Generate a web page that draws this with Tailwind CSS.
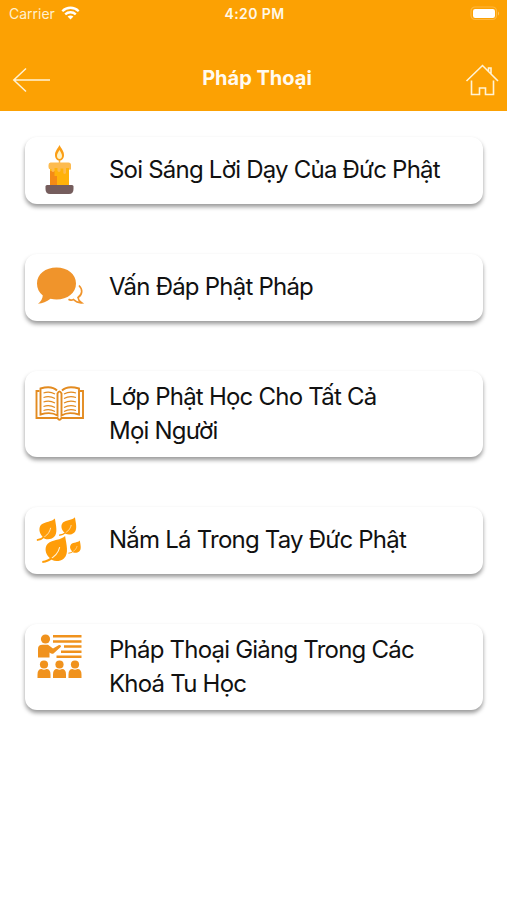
<!DOCTYPE html>
<html lang="vi">

<head>
	<meta charset="UTF-8">
	<meta name="viewport" content="width=device-width, initial-scale=1.0">
	<title>Pháp Thoại</title>
	<script src="https://cdn.jsdelivr.net/npm/@tailwindcss/browser@4"></script>
</head>

<body class="min-h-screen bg-white font-['Inter',sans-serif] text-[#111]">
	<header class="h-[110.5px] bg-[#fca103] text-white">
		<!-- status bar -->
		<div class="grid grid-cols-3 items-center h-[27px] pl-[9px] pr-[7px]">
			<div class="flex items-center gap-[6px] text-[14px] text-[#fff0cf]">
				<span>Carrier</span>
				<svg class="w-[19px] h-[14px] -mt-px" viewBox="0 0 19 14" fill="none" stroke="#fff" stroke-width="2.3">
					<path d="M1.3 5.2C6 .6 13 .6 17.700 5.200" />
					<path d="M4.200 8.400C7.200 5.500 11.800 5.500 14.800 8.400" />
					<path d="M9.500 13.500L6.600 10.500C8.300 9 10.700 9 12.400 10.500Z" fill="#fff" stroke="none" />
				</svg>
			</div>
			<div class="text-center text-[14px] font-semibold tracking-[0.4px] text-[#fff8e8]">4:20 PM</div>
			<svg class="justify-self-end w-[30px] h-[15px]" viewBox="0 0 30 15">
				<rect x="1" y="1" width="25.500" height="12.500" rx="4" fill="none" stroke="#fdb840" stroke-width="1.200" />
				<rect x="3" y="3" width="22" height="9" rx="2.200" fill="#fff" />
				<path d="M28 5.500V9.500C29.300 9 29.300 6 28 5.500Z" fill="#fdc665" />
			</svg>
		</div>
		<!-- navigation -->
		<div class="flex items-center justify-between h-[83px] pl-[12px] pr-[8px] pt-[23px]">
			<a href="#">
				<svg class="w-[39px] h-[26px]" viewBox="0 0 39 26" fill="none" stroke="#fff3d6" stroke-width="1.500">
					<path d="M14 1.500L1.800 13L14 24.500M1.800 13H38" />
				</svg>
			</a>
			<h1 class="pb-[4px] pr-[2px] text-[20px] font-bold text-[#fffaf0]">Pháp Thoại</h1>
			<a href="#">
				<svg class="w-[34px] h-[34px]" viewBox="0 0 34 34" fill="none" stroke="#fff3d6" stroke-width="1.600">
					<path d="M1.500 18L17.500 2.500L33 18M23.500 8V5H26V10.500" />
					<path d="M6.500 17.500V31.500H14.500V25H20.500V31.500H28.500V17.500" />
				</svg>
			</a>
		</div>
	</header>

	<main class="flex flex-col gap-[50px] pt-[26.500px] pl-[25px] pr-[24px] text-[24px] leading-[34px] tracking-[-0.78px]">
		<a href="#" class="flex items-center h-[67px] pb-px pl-[10px] rounded-xl bg-white shadow-[0_3px_4px_rgba(0,0,0,0.4)]">
			<svg class="w-[50px] h-[50px] mr-[24px] shrink-0" viewBox="0 0 50 50">
				<path d="M24.500 15V20" stroke="#f6b04a" stroke-width="1.500" />
				<path d="M24.500 0C22.500 4 20 6 20 10C20 13.500 22 15.500 24.500 15.500C27 15.500 29 13.500 29 10C29 6 26.500 4 24.500 0Z" fill="#fb9e16" />
				<path d="M24.500 5C23 7.500 22 9 22 11C22 13 23.200 14 24.500 14C25.800 14 27 13 27 11C27 9 26 7.500 24.500 5Z" fill="#fff3c4" />
				<path d="M15 20H34V41H15Z" fill="#ffb20a" />
				<path d="M15 26H19.500V31H22V41H15Z" fill="#f48a16" />
				<path d="M15.500 17.500H33.500Q36 17.500 36 20V24Q34.800 26 34 24V23H31V28Q29.500 30 28.300 28V23.500H25.500V26Q24 28 22.500 26V23H19.500V26Q18 28 16.500 26V24Q13.500 25 13.500 22V20Q13.500 17.500 15.500 17.500Z" fill="#fdbb50" />
				<path d="M12 40H37Q38.500 40 38.500 41.500V44Q38.500 49 34 49H15Q10.500 49 10.500 44V41.500Q10.500 40 12 40Z" fill="#755d5d" />
			</svg>
			<span>Soi Sáng Lời Dạy Của Đức Phật</span>
		</a>

		<a href="#" class="flex items-center h-[67px] pb-px pl-[10px] rounded-xl bg-white shadow-[0_3px_4px_rgba(0,0,0,0.4)]">
			<svg class="w-[50px] h-[50px] mr-[24px] shrink-0" viewBox="0 0 50 50">
				<path d="M21.500 5.500C32.500 5.500 41 12 41 21.500C41 31 32.500 37.500 21.500 37.500C19.500 37.500 17.500 37.300 15.500 36.800C11.500 40 7.500 41.500 3 41.800C6 39.500 7.500 36.500 7.800 33.500C4 30.500 2 26.500 2 21.500C2 12 10.500 5.500 21.500 5.500Z" fill="#f0942b" />
				<path d="M44 23.500C48 27.500 47.500 32.500 43 35.500C43.300 38 44.500 39.500 46.500 40.800C42.500 41 40.500 39.500 38.500 37.500C36.500 38.500 34.500 38 33.500 37.300" fill="none" stroke="#f0942b" stroke-width="1.700" />
			</svg>
			<span>Vấn Đáp Phật Pháp</span>
		</a>

		<a href="#" class="flex items-start h-[86px] pt-[9px] pl-[10px] rounded-xl bg-white shadow-[0_3px_4px_rgba(0,0,0,0.4)]">
			<svg class="w-[50px] h-[50px] -mt-px mr-[24px] shrink-0" viewBox="0 0 50 50" fill="none" stroke="#e38b20" stroke-width="1.900">
				<path d="M4.500 12H1.500V39H22.500Q24.500 42.500 26.500 39H48V12H45" />
				<path d="M22 11.500C18 7.500 12 7.500 5.500 9.500V35.500C12 33.500 18 33.500 22.500 36.500V14.500Q24.500 10.500 26.500 14.500V36.500C31 33.500 37 33.500 44 35.500V9.500C37 7.500 31 7.500 27 11.500" />
				<path d="M8.500 14Q14.500 12 20 15M8.500 18.500Q14.500 16.500 20 19.500M8.500 23Q14.500 21 20 24M8.500 27.500Q14.500 25.500 20 28.500M8.500 31.500Q14.500 29.500 20 32.500M29 15Q34.500 12 41 14M29 19.500Q34.500 16.500 41 18.500M29 24Q34.500 21 41 23M29 28.500Q34.500 25.500 41 27.500M29 32.500Q34.500 29.500 41 31.500" stroke-width="1.300" />
			</svg>
			<span>Lớp Phật Học Cho Tất Cả<br>Mọi Người</span>
		</a>

		<a href="#" class="flex items-center h-[67px] pb-px pl-[10px] rounded-xl bg-white shadow-[0_3px_4px_rgba(0,0,0,0.4)]">
			<svg class="w-[50px] h-[50px] mr-[24px] shrink-0" viewBox="0 0 50 50">
				<defs>
					<g id="leaf">
						<path d="M18 0C15 3.500 7.500 3 3.500 6.500C.5 10 1.500 15 5 18.500C6.500 21.500 13 22.500 17 19C21.500 15 19 7 18 0Z" fill="#ff9d09" />
						<path d="M4.500 20C10 17.500 12.500 14 13.500 9.500" fill="none" stroke="#fff0d5" stroke-width=".9" />
						<path d="M-1 22Q4 21.500 7 18.500" fill="none" stroke="#ff9d09" stroke-width="1.700" />
					</g>
				</defs>
				<use href="#leaf" transform="translate(2.800 3.500) scale(.95 .98)" />
				<use href="#leaf" transform="translate(25 2.200) scale(.83 .82)" />
				<use href="#leaf" transform="translate(8.500 21) scale(1.200 1.180)" />
				<use href="#leaf" transform="translate(34 25.500) scale(.6 .58)" />
			</svg>
			<span>Nắm Lá Trong Tay Đức Phật</span>
		</a>

		<a href="#" class="flex items-start h-[86px] pt-[9px] pl-[10px] rounded-xl bg-white shadow-[0_3px_4px_rgba(0,0,0,0.4)]">
			<svg class="w-[50px] h-[50px] -mt-px mr-[24px] shrink-0" viewBox="0 0 50 50" fill="#f0921d">
				<circle cx="10.500" cy="7" r="4.600" />
				<path d="M3 25.500V17Q3 12.800 7.500 12.800H13L18 16.500L24 13Q26.500 12.800 26 14.800L18.500 21.500Q17 22.500 14.500 20.500V25.500Z" />
				<path d="M18 4.300H46.500M18 9.500H46.500M29 14.500H46.500M26 19.700H46.500M21.500 24.700H46.500" stroke="#f0921d" stroke-width="2.500" />
				<g id="student">
					<circle cx="9" cy="32.500" r="4.100" />
					<path d="M2.500 46V42.500Q2.500 37 6.500 37Q9 38.500 11.500 37Q15.500 37 15.500 42.500V46Z" />
				</g>
				<use href="#student" x="15.500" />
				<use href="#student" x="31" />
			</svg>
			<span>Pháp Thoại Giảng Trong Các<br>Khoá Tu Học</span>
		</a>
	</main>
</body>

</html>
